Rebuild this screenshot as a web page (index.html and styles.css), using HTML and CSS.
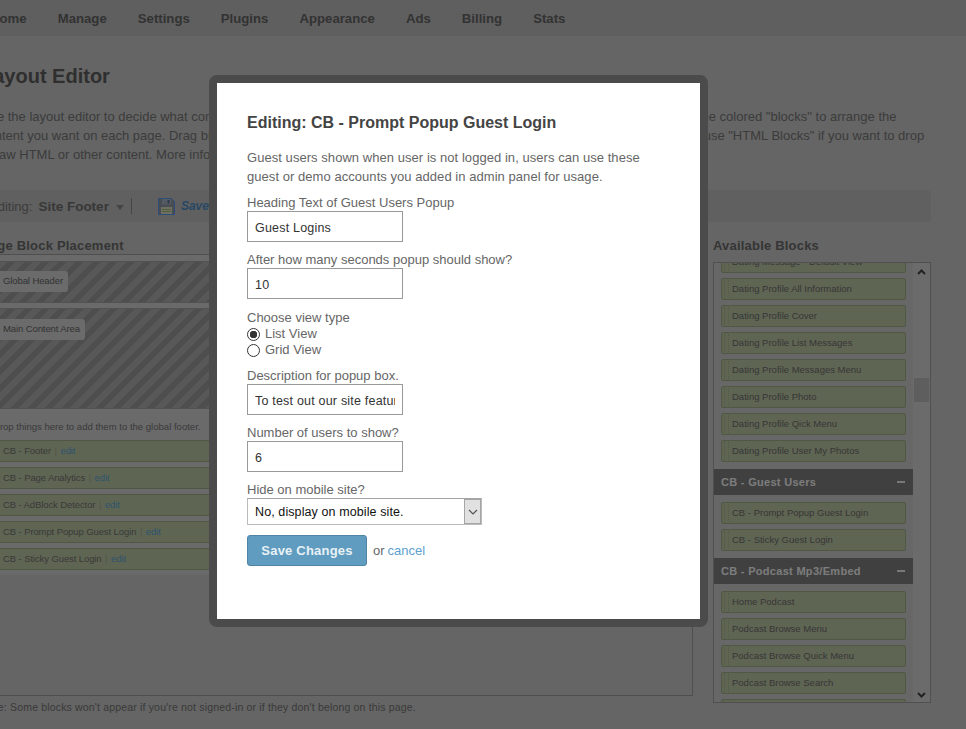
FILE: index.html
```html
<!DOCTYPE html>
<html lang="en">
<head>
<meta charset="utf-8">
<title>Layout Editor</title>
<link rel="stylesheet" href="styles.css">
</head>
<body>
<div class="page">
  <nav class="topnav">
    <a>Home</a><a>Manage</a><a>Settings</a><a>Plugins</a><a>Appearance</a><a>Ads</a><a>Billing</a><a>Stats</a>
  </nav>
  <main class="content">
    <h1>Layout Editor</h1>
    <p class="intro">Use the layout editor to decide what content and features should appear on every page of your site, and then, click and drag the colored "blocks" to arrange the<br>content you want on each page. Drag blocks from the right columns into the page placement area on the left of the page, and use "HTML Blocks" if you want to drop<br>in raw HTML or other content. More info is available in the knowledge base.</p>
    <div class="toolbar">
      <span class="editing">Editing:</span>
      <strong class="pagename">Site Footer</strong>
      <span class="caret"></span>
      <span class="sep"></span>
      <svg class="disk" width="17" height="17" viewBox="0 0 17 17"><path d="M.5.5h13l3 3v13H.5z" fill="#8e9aa6" stroke="#5a9af0"/><rect x="4" y="1" width="9" height="5.5" fill="#a9b6c4"/><rect x="9.5" y="2" width="2" height="3.5" fill="#5f7590"/><rect x="3" y="9" width="11" height="7" fill="#dfe0c8"/><rect x="4" y="11" width="9" height="1" fill="#a8b878"/><rect x="4" y="13" width="9" height="1" fill="#a8b878"/></svg>
      <a class="save">Save</a>
    </div>
    <div class="columns">
      <section class="placement">
        <h2>Page Block Placement</h2>
        <div class="panel">
          <div class="lanes">
            <div class="zone short"><span class="tag">Global Header</span></div>
            <div class="zone tall"><span class="tag">Main Content Area</span></div>
            <div class="footerzone">
              <p class="hint">Drop things here to add them to the global footer.</p>
              <div class="placed">CB - Footer <i>|</i> <a>edit</a></div>
              <div class="placed">CB - Page Analytics <i>|</i> <a>edit</a></div>
              <div class="placed">CB - AdBlock Detector <i>|</i> <a>edit</a></div>
              <div class="placed">CB - Prompt Popup Guest Login <i>|</i> <a>edit</a></div>
              <div class="placed">CB - Sticky Guest Login <i>|</i> <a>edit</a></div>
            </div>
          </div>
        </div>
        <p class="note">Note: Some blocks won't appear if you're not signed-in or if they don't belong on this page.</p>
      </section>
      <aside class="available">
        <h2>Available Blocks</h2>
        <div class="scroller">
          <div class="list">
            <div class="stack first">
              <div class="block">Dating Message - Default View</div>
              <div class="block">Dating Profile All Information</div>
              <div class="block">Dating Profile Cover</div>
              <div class="block">Dating Profile List Messages</div>
              <div class="block">Dating Profile Messages Menu</div>
              <div class="block">Dating Profile Photo</div>
              <div class="block">Dating Profile Qick Menu</div>
              <div class="block">Dating Profile User My Photos</div>
            </div>
            <div class="group"><span>CB - Guest Users</span><b></b></div>
            <div class="stack">
              <div class="block">CB - Prompt Popup Guest Login</div>
              <div class="block">CB - Sticky Guest Login</div>
            </div>
            <div class="group"><span>CB - Podcast Mp3/Embed</span><b></b></div>
            <div class="stack">
              <div class="block">Home Podcast</div>
              <div class="block">Podcast Browse Menu</div>
              <div class="block">Podcast Browse Quick Menu</div>
              <div class="block">Podcast Browse Search</div>
              <div class="block">Podcast Category</div>
            </div>
          </div>
          <div class="scrollbar">
            <svg width="9" height="6" viewBox="0 0 9 6"><path d="M1 5l3.5-3.5L8 5" fill="none" stroke="#444" stroke-width="2"/></svg>
            <span class="thumb"></span>
            <svg width="9" height="6" viewBox="0 0 9 6"><path d="M1 1l3.5 3.5L8 1" fill="none" stroke="#444" stroke-width="2"/></svg>
          </div>
        </div>
      </aside>
    </div>
  </main>
</div>
<div class="overlay"></div>
<div class="modal">
  <div class="modal-inner">
    <h3>Editing: CB - Prompt Popup Guest Login</h3>
    <p class="desc">Guest users shown when user is not logged in, users can use these guest or demo accounts you added in admin panel for usage.</p>
    <label class="field">Heading Text of Guest Users Popup<input class="text" type="text" value="Guest Logins"></label>
    <label class="field">After how many seconds popup should show?<input class="text" type="text" value="10"></label>
    <div class="field radios">Choose view type
      <label class="radio"><input type="radio" name="v" checked>List View</label>
      <label class="radio"><input type="radio" name="v">Grid View</label>
    </div>
    <label class="field">Description for popup box.<input class="text" type="text" value="To test out our site features, you can use these accounts"></label>
    <label class="field">Number of users to show?<input class="text" type="text" value="6"></label>
    <label class="field">Hide on mobile site?
      <span class="select"><span class="selval">No, display on mobile site.</span><span class="selbtn"><svg width="10" height="6" viewBox="0 0 10 6"><path d="M1 1l4 4 4-4" fill="none" stroke="#555" stroke-width="1.2"/></svg></span></span>
    </label>
    <div class="actions"><button class="btn" type="button">Save Changes</button><span class="or">or</span><a class="cancel">cancel</a></div>
  </div>
</div>
</body>
</html>
```
FILE: styles.css
```css
* { box-sizing: border-box; }
html, body { margin: 0; height: 100%; overflow: hidden; }
body { font-family: "Liberation Sans", Arial, sans-serif; background: #cacaca; color: #787878; width: 966px; height: 729px; position: relative; }
.page { width: 966px; height: 729px; overflow: hidden; }
.topnav { height: 36px; width: 990px; background: #bebebe; display: flex; gap: 31px; margin-left: -10px; align-items: center; font-size: 13.2px; font-weight: bold; color: #666; }
.content { margin-left: -19px; width: 950px; }
h1 { margin: 28px 0 0; font-size: 20px; line-height: 24px; color: #5e5e5e; }
.intro { margin: 19px 0 0; font-size: 13px; line-height: 19px; color: #787878; white-space: nowrap; }
.toolbar { margin-top: 26px; height: 32px; background: #c0c0c0; border-radius: 4px; display: flex; align-items: center; font-size: 12px; padding-left: 8px; }
.editing { color: #787878; font-size: 13px; }
.pagename { margin-left: 6px; font-size: 13.5px; color: #707070; }
.caret { border: 4px solid transparent; border-top: 5px solid #8a8a8a; border-bottom: 0; margin: 3px 7px 0 7px; }
.sep { width: 1px; height: 16px; background: #8a8a8a; margin-right: 26px; }
.disk { margin-right: 6px; }
.save { color: #4f90c8; font-weight: bold; font-style: italic; }
.columns { display: flex; margin-top: 14px; }
.placement { width: 712px; }
.available { margin-left: 20px; width: 218px; }
h2 { margin: 0; padding-top: 2px; font-size: 13px; line-height: 16px; letter-spacing: .2px; color: #6a6a6a; }
.panel { height: 442px; border: 1px solid #9e9e9e; }
.lanes { background: #d4d4d4; padding-top: 6px; padding-bottom: 5px; }
.zone { background: repeating-linear-gradient(135deg, #b0b0b0 0 6px, #9c9c9c 6px 12px); border-top: 1px solid #a4a4a4; border-bottom: 1px solid #a4a4a4; padding-top: 9px; }
.short { height: 42px; }
.tall { height: 101px; margin-top: 5px; padding-top: 10px; }
.tag { display: block; width: fit-content; background: #d6d6d6; color: #666; font-size: 9.5px; height: 21px; line-height: 19px; padding: 0 5px 0 21px; border-radius: 3px; letter-spacing: -.1px; }
.footerzone { padding-top: 9px; }
.hint { margin: 0 0 4px; padding-left: 11px; font-size: 9.5px; line-height: 18px; color: #747474; letter-spacing: .02px; }
.placed { height: 22px; line-height: 19px; margin-bottom: 5px; background: #bfcaa6; border: 1px solid #a0b088; font-size: 9.5px; color: #747474; padding-left: 20px; letter-spacing: -.1px; }
.placed:last-child { margin-bottom: 0; }
.placed i { color: #a4ae94; font-style: normal; padding: 0 1px; }
.placed a { color: #5ea8d8; }
.note { margin: 5px 0 0; font-size: 10.5px; line-height: 12px; color: #747474; letter-spacing: .17px; }
.scroller { margin-top: 8px; height: 441px; width: 218px; border: 1px solid #a0a0a0; display: flex; overflow: hidden; background: #cecece; }
.list { width: 199px; }
.stack { padding: 7px; display: flex; flex-direction: column; gap: 5px; }
.stack.first { padding-top: 0; margin-top: -12px; }
.block { height: 22px; flex: none; background: #bfcaa6; border: 1px solid #a0b088; border-radius: 2px; font-size: 9.5px; line-height: 19px; color: #6e6e6e; padding-left: 10px; position: relative; }
.block::before { content: ""; position: absolute; left: 2px; top: 1px; bottom: 1px; width: 3px; border-left: 1px dotted #a6b48c; border-right: 1px dotted #a6b48c; }
.group { height: 26px; background: #808080; color: #f8f8f8; font-weight: bold; font-size: 11px; letter-spacing: .3px; display: flex; justify-content: space-between; align-items: center; padding: 0 8px 0 7px; }
.group b { width: 8px; height: 2px; background: #f0f0f0; }
.scrollbar { width: 17px; background: #d6d6d6; display: flex; flex-direction: column; align-items: center; position: relative; justify-content: space-between; padding: 6px 0 4px; }
.thumb { position: absolute; left: 1px; top: 115px; width: 15px; height: 24px; background: #bcbcbc; }
.overlay { position: absolute; inset: 0; background: rgba(0,0,0,.5); }
.modal { position: absolute; left: 209px; top: 75px; width: 499px; height: 552px; border: 8px solid #4b4b4b; border-radius: 8px; background: #fff; overflow: hidden; }
.modal-inner { padding: 29px 30px 0; background: #fff; height: 100%; font-size: 13px; color: #666; }
h3 { margin: 0; font-size: 16px; line-height: 22px; color: #444; }
.desc { margin: 14px 0 -1px; font-size: 13px; line-height: 19px; color: #666; max-width: 420px; letter-spacing: .05px; }
.field { display: block; font-size: 13px; line-height: 16px; color: #666; margin-top: 10px; }
.text { display: block; width: 156px; height: 31px; border: 1px solid #999; padding: 2px 7px 0; font: 12.5px "Liberation Sans", Arial, sans-serif; letter-spacing: .2px; color: #333; background: #fff; border-radius: 0; outline: 0; margin: 0; }
.radios { margin-top: 11px; }
.radio { display: flex; align-items: center; height: 16px; }
.radio input { appearance: none; margin: 1px 5px 0 0; width: 13px; height: 13px; border: 1px solid #333; border-radius: 50%; background: #fff; }
.radio input:checked { background: radial-gradient(circle, #333 0 3.5px, #fff 4px); }
.select { display: flex; width: 235px; height: 27px; border: 1px solid #bbb; border-top-color: #a5a5a5; background: #fff; }
.selval { flex: 1; padding-left: 7px; line-height: 27px; color: #111; font-size: 12.5px; letter-spacing: .1px; }
.selbtn { width: 17px; background: #e1e1e1; border: 1px solid #a5a5a5; display: flex; align-items: center; justify-content: center; }
.actions { display: flex; align-items: center; margin-top: 10px; }
.btn { width: 120px; height: 31px; background: #5f9cbf; border: 1px solid #4f84a4; border-radius: 3px; color: #e8f1f6; font: bold 13px "Liberation Sans", Arial, sans-serif; letter-spacing: .2px; padding: 0; }
.or { margin-left: 6px; }
.cancel { margin-left: 3px; color: #5d9fd0; }
```
